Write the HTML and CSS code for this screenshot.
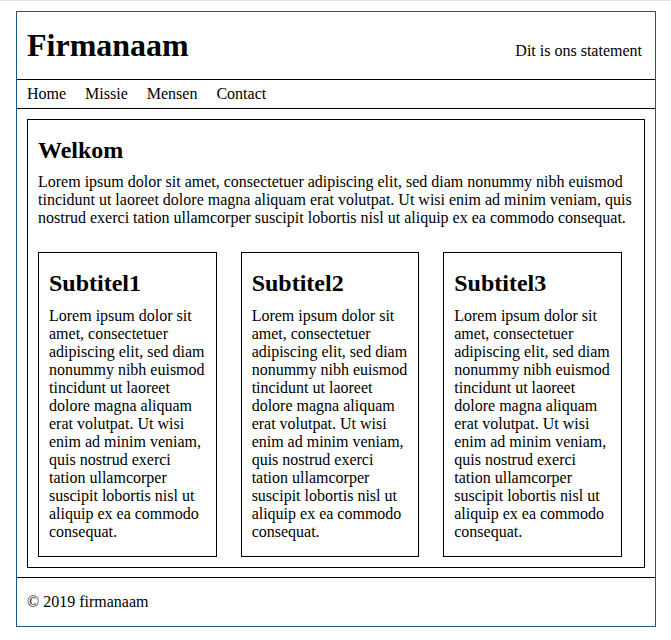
FILE: index.html
```html
<!DOCTYPE html>
<html lang="nl">
<head>
<meta charset="utf-8">
<title>Firmanaam</title>
<link rel="stylesheet" href="styles.css">
</head>
<body>
<div class="page">
  <header class="site-header">
    <h1 class="brand">Firmanaam</h1>
    <span class="statement">Dit is ons statement</span>
  </header>
  <nav class="site-nav">
    <a href="#">Home</a>
    <a href="#">Missie</a>
    <a href="#">Mensen</a>
    <a href="#">Contact</a>
  </nav>
  <main class="site-main">
    <section class="content">
      <h2 class="title">Welkom</h2>
      <p class="intro">Lorem ipsum dolor sit amet, consectetuer adipiscing elit, sed diam nonummy nibh euismod tincidunt ut laoreet dolore magna aliquam erat volutpat. Ut wisi enim ad minim veniam, quis nostrud exerci tation ullamcorper suscipit lobortis nisl ut aliquip ex ea commodo consequat.</p>
      <div class="columns">
        <article class="col">
          <h2 class="title col-title">Subtitel1</h2>
          <p class="text">Lorem ipsum dolor sit amet, consectetuer adipiscing elit, sed diam nonummy nibh euismod tincidunt ut laoreet dolore magna aliquam erat volutpat. Ut wisi enim ad minim veniam, quis nostrud exerci tation ullamcorper suscipit lobortis nisl ut aliquip ex ea commodo consequat.</p>
        </article>
        <article class="col">
          <h2 class="title col-title">Subtitel2</h2>
          <p class="text">Lorem ipsum dolor sit amet, consectetuer adipiscing elit, sed diam nonummy nibh euismod tincidunt ut laoreet dolore magna aliquam erat volutpat. Ut wisi enim ad minim veniam, quis nostrud exerci tation ullamcorper suscipit lobortis nisl ut aliquip ex ea commodo consequat.</p>
        </article>
        <article class="col">
          <h2 class="title col-title">Subtitel3</h2>
          <p class="text">Lorem ipsum dolor sit amet, consectetuer adipiscing elit, sed diam nonummy nibh euismod tincidunt ut laoreet dolore magna aliquam erat volutpat. Ut wisi enim ad minim veniam, quis nostrud exerci tation ullamcorper suscipit lobortis nisl ut aliquip ex ea commodo consequat.</p>
        </article>
      </div>
    </section>
  </main>
  <footer class="site-footer">© 2019 firmanaam</footer>
</div>
</body>
</html>
```

FILE: styles.css
```css
html {
  border-top: 1px solid #e3e3e3;
}
body {
  margin: 0;
  font-family: "Liberation Serif", "Times New Roman", serif;
  font-size: 16px;
  color: #000;
  background: #fff;
}
.page {
  box-sizing: border-box;
  width: 640px;
  margin: 10px 0 0 16px;
  border: 1px solid #1b5a87;
}
.site-header {
  display: flex;
  justify-content: space-between;
  align-items: baseline;
  padding: 0 13px 0 10px;
  border-bottom: 1px solid #000;
}
.brand {
  margin: 15px 0;
  font-size: 32px;
  font-weight: bold;
}
.site-nav {
  display: flex;
  gap: 19px;
  padding: 5px 10px;
  border-bottom: 1px solid #000;
}
.site-nav a {
  color: #000;
  text-decoration: none;
}
.site-main {
  padding: 10px 10px 9px;
  border-bottom: 1px solid #000;
}
.content {
  border: 1px solid #000;
  padding: 10px;
}
.title {
  margin: 7px 0 9px;
  font-size: 24px;
  font-weight: bold;
}
.col-title {
  margin-bottom: 10px;
}
.intro {
  margin: 0 0 25px;
}
.columns {
  display: flex;
  gap: 4%;
  align-items: stretch;
}
.col {
  box-sizing: border-box;
  width: 30%;
  border: 1px solid #000;
  padding: 10px;
}
.text {
  margin: 0 0 5px;
}
.site-footer {
  padding: 15px 10px;
}
```
